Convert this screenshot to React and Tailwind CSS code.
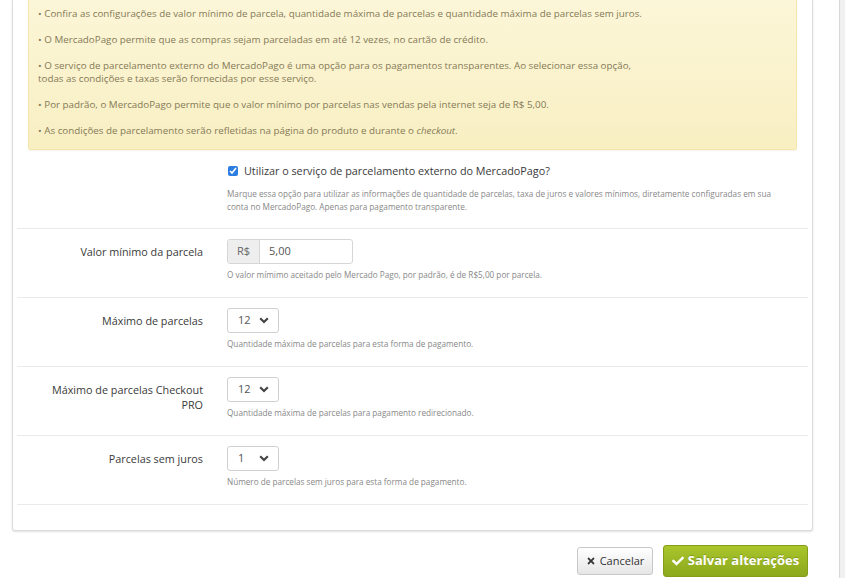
import React from "react";
import { FaCheck, FaTimes } from "react-icons/fa";

const tips = [
  ["Confira as configurações de valor mínimo de parcela, quantidade máxima de parcelas e quantidade máxima de parcelas sem juros."],
  ["O MercadoPago permite que as compras sejam parceladas em até 12 vezes, no cartão de crédito."],
  [
    "O serviço de parcelamento externo do MercadoPago é uma opção para os pagamentos transparentes. Ao selecionar essa opção,",
    "todas as condições e taxas serão fornecidas por esse serviço.",
  ],
  ["Por padrão, o MercadoPago permite que o valor mínimo por parcelas nas vendas pela internet seja de R$ 5,00."],
];

const rows = [
  {
    label: ["Valor mínimo da parcela"],
    type: "money",
    value: "5,00",
    help: "O valor mímimo aceitado pelo Mercado Pago, por padrão, é de R$5,00 por parcela.",
  },
  {
    label: ["Máximo de parcelas"],
    type: "select",
    value: "12",
    help: "Quantidade máxima de parcelas para esta forma de pagamento.",
  },
  {
    label: ["Máximo de parcelas Checkout", "PRO"],
    type: "select",
    value: "12",
    help: "Quantidade máxima de parcelas para pagamento redirecionado.",
  },
  {
    label: ["Parcelas sem juros"],
    type: "select",
    value: "1",
    help: "Número de parcelas sem juros para esta forma de pagamento.",
  },
];

const Chevron = () => (
  <svg width="10" height="7" viewBox="0 0 10 7" className="text-[#444]">
    <path d="M1.2 1.3 L5 5 L8.8 1.3" fill="none" stroke="currentColor" strokeWidth="2.2" />
  </svg>
);

const Control = ({ row }) => {
  if (row.type === "money") {
    return (
      <div className="flex h-[25px] w-[126px] rounded-[3px] border border-[#d6d6d6] overflow-hidden">
        <span className="flex items-center justify-center w-[32px] bg-[#eeeeee] border-r border-[#d6d6d6] text-[11px] text-[#666]">
          R$
        </span>
        <span className="flex items-center pl-[9px] text-[11px] text-[#555] bg-white">{row.value}</span>
      </div>
    );
  }
  return (
    <div className="flex h-[25px] w-[52px] items-center justify-between rounded-[3px] border border-[#d0d0d0] bg-white pl-[10px] pr-[9px]">
      <span className="text-[11px] text-[#555]">{row.value}</span>
      <Chevron />
    </div>
  );
};

const FormRow = ({ row }) => (
  <div className="flex border-b border-[#eaeaea] pt-[10px] pb-[16px]">
    <div className="w-[196px] shrink-0 pr-[10px] pt-[5px] text-right text-[10.8px] leading-[15px] text-[#3a3a3a]">
      {row.label.map((l) => (
        <div key={l}>{l}</div>
      ))}
    </div>
    <div className="pl-[14px]">
      <Control row={row} />
      <p className="mt-[4px] text-[8.2px] leading-[13px] text-[#888]">{row.help}</p>
    </div>
  </div>
);

export default function App() {
  return (
    <div className="flex min-h-[578px] bg-white font-['Open_Sans',sans-serif]">
      <div className="flex-1 pl-[12px] pr-[26px]">
        <div className="rounded-b-[3px] border border-t-0 border-[#dcdcdc] bg-white px-[4px] pb-[25px] shadow-[0_1px_2px_rgba(0,0,0,0.12)]">
          <div className="mx-[11px] rounded-b-[3px] border border-t-0 border-[#f3e6a8] bg-gradient-to-b from-[#fcf6d8] to-[#f8efc2] pl-[9px] pr-[10px] pt-[7px] pb-[12px] text-[9.8px] leading-[13px] text-[#857a58] shadow-[0_1px_1px_rgba(0,0,0,0.05)]">
            {tips.map((t, i) => (
              <p key={i} className="mb-[13px]">
                {t.map((line, j) => (
                  <span key={j} className="block">
                    {j === 0 ? "• " : ""}
                    {line}
                  </span>
                ))}
              </p>
            ))}
            <p>
              • As condições de parcelamento serão refletidas na página do produto e durante o <em>checkout</em>.
            </p>
          </div>

          <div className="mt-[13px] flex border-b border-[#eaeaea] pb-[15px]">
            <div className="w-[196px] shrink-0" />
            <div className="pl-[15px] pr-[20px]">
              <label className="flex items-center gap-[6px] text-[10.8px] leading-[15px] text-[#3a3a3a]">
                <input type="checkbox" defaultChecked className="h-[10px] w-[10px] m-0 accent-[#2b7de1]" />
                Utilizar o serviço de parcelamento externo do MercadoPago?
              </label>
              <p className="mt-[9px] -ml-[1px] text-[8.2px] leading-[13px] text-[#888]">
                Marque essa opção para utilizar as informações de quantidade de parcelas, taxa de juros e valores mínimos, diretamente configuradas em sua
                <br />
                conta no MercadoPago. Apenas para pagamento transparente.
              </p>
            </div>
          </div>

          {rows.map((row) => (
            <FormRow key={row.label[0]} row={row} />
          ))}
        </div>

        <div className="mt-[14px] flex items-center justify-end gap-[10px] pr-[5px]">
          <button className="flex h-[28px] w-[76px] items-center justify-center gap-[4px] rounded-[3px] border border-[#c8c8c8] bg-gradient-to-b from-white to-[#e6e6e6] text-[11px] text-[#333]">
            <FaTimes className="text-[10px]" />
            Cancelar
          </button>
          <button className="flex h-[32px] w-[145px] items-center justify-center gap-[4px] rounded-[3px] border border-[#849e18] bg-gradient-to-b from-[#a9c62c] to-[#8ca81d] text-[13px] font-bold text-white [text-shadow:0_-1px_0_rgba(0,0,0,0.2)]">
            <FaCheck className="text-[12px]" />
            Salvar alterações
          </button>
        </div>
      </div>
      <div className="w-[6px] border-l border-[#d8d8d8] bg-[#f1f1f1]" />
    </div>
  );
}
